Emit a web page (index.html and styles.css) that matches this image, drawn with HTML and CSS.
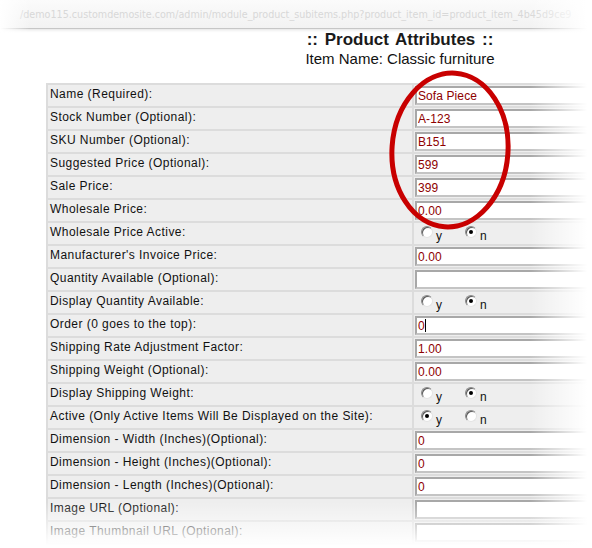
FILE: index.html
```html
<!DOCTYPE html>
<html>
<head>
<meta charset="utf-8">
<link rel="stylesheet" href="styles.css">
</head>
<body>
<div class="shot">
  <div class="urlbar">/demo115.customdemosite.com/admin/module_product_subitems.php?product_item_id=product_item_4b45d9ce9</div>
  <div class="page">
    <div class="heading">
      <div class="title">:: Product Attributes ::</div>
      <div class="subtitle">Item Name: Classic furniture</div>
    </div>
    <table class="attrs">
      <tr><td class="lbl">Name (Required):</td><td class="val"><input class="field" value="Sofa Piece"></td></tr>
      <tr><td class="lbl">Stock Number (Optional):</td><td class="val"><input class="field" value="A-123"></td></tr>
      <tr><td class="lbl">SKU Number (Optional):</td><td class="val"><input class="field" value="B151"></td></tr>
      <tr><td class="lbl">Suggested Price (Optional):</td><td class="val"><input class="field" value="599"></td></tr>
      <tr><td class="lbl">Sale Price:</td><td class="val"><input class="field" value="399"></td></tr>
      <tr><td class="lbl">Wholesale Price:</td><td class="val"><input class="field" value="0.00"></td></tr>
      <tr><td class="lbl">Wholesale Price Active:</td><td class="val radios"><span class="radio"></span><span class="opt">y</span><span class="radio on"></span><span class="opt">n</span></td></tr>
      <tr><td class="lbl">Manufacturer's Invoice Price:</td><td class="val"><input class="field" value="0.00"></td></tr>
      <tr><td class="lbl">Quantity Available (Optional):</td><td class="val"><input class="field" value=""></td></tr>
      <tr><td class="lbl">Display Quantity Available:</td><td class="val radios"><span class="radio"></span><span class="opt">y</span><span class="radio on"></span><span class="opt">n</span></td></tr>
      <tr><td class="lbl">Order (0 goes to the top):</td><td class="val"><span class="caret-wrap"><input class="field" value="0"><span class="caret"></span></span></td></tr>
      <tr><td class="lbl">Shipping Rate Adjustment Factor:</td><td class="val"><input class="field" value="1.00"></td></tr>
      <tr><td class="lbl">Shipping Weight (Optional):</td><td class="val"><input class="field" value="0.00"></td></tr>
      <tr><td class="lbl">Display Shipping Weight:</td><td class="val radios"><span class="radio"></span><span class="opt">y</span><span class="radio on"></span><span class="opt">n</span></td></tr>
      <tr><td class="lbl">Active (Only Active Items Will Be Displayed on the Site):</td><td class="val radios"><span class="radio on"></span><span class="opt">y</span><span class="radio"></span><span class="opt">n</span></td></tr>
      <tr><td class="lbl">Dimension - Width (Inches)(Optional):</td><td class="val"><input class="field" value="0"></td></tr>
      <tr><td class="lbl">Dimension - Height (Inches)(Optional):</td><td class="val"><input class="field" value="0"></td></tr>
      <tr><td class="lbl">Dimension - Length (Inches)(Optional):</td><td class="val"><input class="field" value="0"></td></tr>
      <tr><td class="lbl">Image URL (Optional):</td><td class="val"><input class="field" value=""></td></tr>
      <tr><td class="lbl">Image Thumbnail URL (Optional):</td><td class="val"><input class="field" value=""></td></tr>
    </table>
  </div>
  <svg class="annot" width="592" height="548" viewBox="0 0 592 548">
    <ellipse cx="450" cy="150" rx="58" ry="77" transform="rotate(4 450 150)" fill="none" stroke="#c80000" stroke-width="5"/>
  </svg>
  <div class="fade-left"></div>
  <div class="fade-right"></div>
  <div class="fade-bottom"></div>
</div>
</body>
</html>
```
FILE: styles.css
```css
html, body {
  margin: 0;
  padding: 0;
  background: #fff;
  overflow: hidden;
}
body {
  font-family: "Liberation Sans", Arial, sans-serif;
  color: #000;
}
.shot {
  position: relative;
  width: 592px;
  height: 548px;
  overflow: hidden;
}
.urlbar {
  height: 28px;
  line-height: 29px;
  padding-left: 20px;
  border-bottom: 1px solid #c6c6c6;
  background: linear-gradient(#fbfbfb, #f2f2f2);
  box-shadow: 0 1px 3px rgba(0, 0, 0, 0.12);
  font-family: "DejaVu Sans", sans-serif;
  font-size: 9.6px;
  color: #d8d8d8;
  white-space: nowrap;
}
.page {
  width: 708px;
  margin-left: 46px;
}
.heading {
  text-align: center;
  padding-top: 1px;
}
.title {
  font-size: 17px;
  font-weight: bold;
  line-height: 20px;
  color: #1a1a1a;
  word-spacing: 2px;
}
.subtitle {
  font-size: 15px;
  line-height: 17px;
  color: #111;
}
.attrs {
  margin-top: 16px;
  border-collapse: separate;
  border-spacing: 2px;
  background: #dcdcdc;
}
.attrs td {
  background: #eeeeee;
  padding: 0;
  vertical-align: top;
}
.lbl {
  width: 363px;
  padding: 1px 0 3px 2px !important;
  font-size: 12px;
  line-height: 17px;
  letter-spacing: 0.45px;
  white-space: nowrap;
  color: #111;
}
.val {
  width: 338px;
  padding: 1px 0 1px 1px !important;
  height: 19px;
}
.field {
  display: block;
  box-sizing: border-box;
  width: 300px;
  height: 19px;
  margin: 0;
  padding: 0 0 0 1px;
  border: 2px solid #a8a8a8;
  border-bottom-color: #c4c4c4;
  border-right-color: #c4c4c4;
  background: #fff;
  font-family: "Liberation Sans", Arial, sans-serif;
  font-size: 12px;
  letter-spacing: 0.1px;
  color: #8e0000;
  outline: none;
}
.caret-wrap {
  position: relative;
  display: block;
}
.caret {
  position: absolute;
  left: 10px;
  top: 3px;
  width: 1px;
  height: 13px;
  background: #000;
}
.radios {
  font-size: 12px;
  line-height: 19px;
  white-space: nowrap;
}
.radio {
  display: inline-block;
  box-sizing: border-box;
  width: 12px;
  height: 12px;
  border-radius: 50%;
  border: 1px solid;
  border-color: #8a8a8a #e4e4e4 #e4e4e4 #8a8a8a;
  box-shadow: inset 1px 1px 0 #5a5a5a;
  background: #fff;
  vertical-align: -1px;
  position: relative;
  margin-left: 6px;
}
.radio + .opt + .radio {
  margin-left: 23px;
}
.radio.on::after {
  content: "";
  position: absolute;
  left: 3px;
  top: 3px;
  width: 4px;
  height: 4px;
  border-radius: 50%;
  background: #000;
}
.opt {
  display: inline-block;
  margin-left: 3px;
  position: relative;
  top: 3px;
  color: #111;
}
.annot {
  position: absolute;
  left: 0;
  top: 0;
  pointer-events: none;
}
.fade-left {
  position: absolute;
  left: 0;
  top: 0;
  width: 30px;
  height: 34px;
  background: linear-gradient(to right, #fff, rgba(255, 255, 255, 0));
}
.fade-right {
  position: absolute;
  right: 0;
  top: 0;
  width: 62px;
  height: 548px;
  background: linear-gradient(to right, rgba(255, 255, 255, 0), #fff 92%);
}
.fade-bottom {
  position: absolute;
  left: 0;
  bottom: 0;
  width: 592px;
  height: 46px;
  background: linear-gradient(rgba(255, 255, 255, 0), #fff 95%);
}
```
